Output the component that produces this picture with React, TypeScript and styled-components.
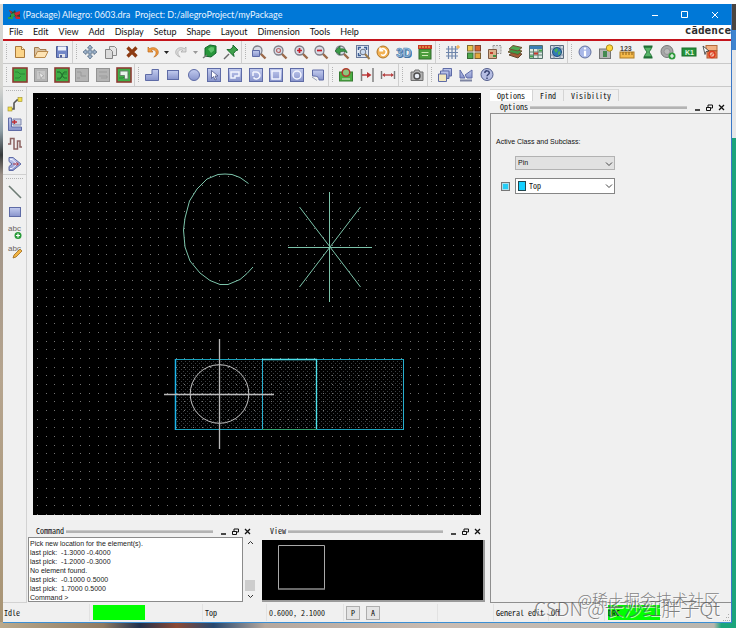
import React from 'react';
import styled, { createGlobalStyle } from 'styled-components';

const GlobalStyle = createGlobalStyle`
  * { box-sizing: border-box; }
  html, body { margin: 0; padding: 0; }
  button, select, input, textarea { font: inherit; color: inherit; margin: 0; padding: 0; }
`;

const ui = 'Lato, "Open Sans", sans-serif';
const sans = '"Liberation Sans", Arial, sans-serif';
const mono = '"Noto Sans CJK SC", "Liberation Mono", monospace';

const Desktop = styled.div`
  display: flex;
  flex-direction: column;
  min-height: 100vh;
  padding: 4px 4px 5px 3px;
  position: relative;
  overflow: hidden;
  background:
    linear-gradient(#fff, #fff) 0 0 / 100% 4px no-repeat,
    linear-gradient(#4b4540 0 30px, #3f84cf 30px 50px, #e6e7e8 50px 138px, #1ba47b 138px) 100% 0 / 5px 100% no-repeat,
    linear-gradient(90deg, #b9a98c 0, #8f7b62 14%, #20304c 19%, #8b4a35 24%, #27486f 29%, #b5a89e 36%, #c9bcb2 60%, #b9b6ae 97%, #1ba47b 98%) 0 100% / 100% 6px no-repeat,
    linear-gradient(#d6d6d2 0 86px, #8fa0a8 130px, #35383a 155px, #9a8f86 175px, #b6a58f 60%, #a89474);
`;

const Window = styled.main`
  display: flex;
  flex-direction: column;
  flex: 1;
  background: #f0f0f0;
  border-right: 1px solid #3a78c8;
  border-bottom: 1px solid #3b8fd4;
  font: 9px/12px ${ui};
  color: #111;
`;

const TitleBar = styled.header`
  display: flex;
  align-items: center;
  height: 21px;
  padding: 0 1px 0 5px;
  gap: 3px;
  background: #0078d7;
  color: #e9f4ff;
`;

const TitleText = styled.h1`
  flex: 1;
  margin: 0;
  font: inherit;
  white-space: pre;
`;

const ControlRow = styled.div`
  display: flex;
`;

const WindowButton = styled.button`
  display: grid;
  place-items: center;
  width: 30px;
  height: 20px;
  border: 0;
  background: none;
`;

const MenuBar = styled.nav`
  display: flex;
  align-items: center;
  height: 16px;
  padding: 0 0 1px 6px;
  gap: 10px;
  background: #fff;
  border-bottom: 2px solid #c4141c;
`;

const MenuItem = styled.button`
  padding: 0;
  border: 0;
  background: none;
`;

const Brand = styled.span`
  margin-left: auto;
  padding-bottom: 2px;
  font: bold 11px/12px "DejaVu Sans Mono", monospace;
  color: #2d2d2d;
`;

const Toolbar = styled.div`
  display: flex;
  height: 23px;
  border-bottom: 1px solid #c9c9c9;
  background: #f1f1f1;
`;

const ToolGroup = styled.div<{ $width: number; $last?: boolean }>`
  display: flex;
  align-items: center;
  width: ${(p) => p.$width}px;
  border-right: ${(p) => (p.$last ? '0' : '1px solid #cfcfcf')};
`;

const Grip = styled.span`
  width: 7px;
  height: 16px;
  flex: none;
  background: repeating-linear-gradient(#b4b4b4 0 1px, transparent 1px 2px) 3px 0 / 1px 100% no-repeat;
`;

const ToolButton = styled.button`
  display: grid;
  place-items: center;
  flex: 1 1 16px;
  min-width: 0;
  height: 20px;
  border: 0;
  background: none;
`;

const CaretButton = styled(ToolButton)`
  flex: 0 0 8px;
`;

const Body = styled.div`
  display: flex;
  flex: 1;
  min-height: 0;
`;

const Sidebar = styled.aside`
  display: flex;
  flex-direction: column;
  width: 24px;
  border-right: 1px solid #d2d2d2;
  border-bottom: 1px solid #d2d2d2;
`;

const SideGroup = styled.div`
  display: flex;
  flex-direction: column;
  & + & { border-top: 1px solid #cfcfcf; }
`;

const SideGrip = styled.span`
  height: 7px;
  margin: 0 3px;
  background: repeating-linear-gradient(90deg, #b4b4b4 0 1px, transparent 1px 2px) 0 3px / 100% 1px no-repeat;
`;

const SideButton = styled.button`
  display: grid;
  place-items: center;
  height: 20px;
  border: 0;
  background: none;
`;

const Workspace = styled.section`
  display: flex;
  flex-direction: column;
  flex: 1;
  min-width: 0;
  padding: 6px 5px 1px 1px;
`;

const Canvas = styled.svg`
  display: block;
  flex: 1 1 0;
  min-height: 0;
  width: calc(100% - 9px);
  margin: 0 4px 0 5px;
  background: #000;
`;

const Docks = styled.div`
  display: flex;
  gap: 7px;
  height: 87px;
  padding-top: 10px;
`;

const Dock = styled.section<{ $width?: number }>`
  display: flex;
  flex-direction: column;
  flex: ${(p) => (p.$width ? `0 0 ${p.$width}px` : '1')};
  min-width: 0;
`;

const PanelTitle = styled.div<{ $wide?: boolean }>`
  display: flex;
  align-items: center;
  height: 12px;
  padding: ${(p) => (p.$wide ? '0 4px 0 10px' : '0 2px 0 8px')};
  font: 8px/12px ${mono};
  font-feature-settings: "hwid";
`;

const PanelName = styled.h2`
  margin: 0;
  font: inherit;
`;

const PanelRule = styled.span`
  flex: 1;
  height: 3px;
  margin: 0 4px 0 2px;
  background: #b3b3b3;
  border-top: 1px solid #c8c8c8;
`;

const PanelButton = styled.button`
  display: grid;
  place-items: center;
  width: 12px;
  height: 12px;
  border: 0;
  background: none;
`;

const LogRow = styled.div`
  display: flex;
  flex: 1;
  gap: 2px;
`;

const Log = styled.textarea`
  flex: 1;
  min-width: 0;
  resize: none;
  overflow: hidden;
  border: 1px solid #8b8b8b;
  outline: 0;
  padding: 1px 1px 0;
  background: #fff;
  font: 7px/9px ${sans};
  color: #222;
  white-space: pre;
`;

const Scroll = styled.div`
  display: flex;
  flex-direction: column;
  align-items: center;
  width: 10px;
`;

const ScrollButton = styled.button`
  display: grid;
  place-items: center;
  width: 10px;
  height: 11px;
  border: 0;
  background: none;
`;

const Thumb = styled.span`
  width: 10px;
  height: 11px;
  margin-top: auto;
  background: #cdcdcd;
`;

const Overview = styled.svg`
  display: block;
  flex: 1;
  min-height: 0;
  width: 100%;
  margin-top: 3px;
  background: #000;
  border: solid #9a9a9a;
  border-width: 0 2px 2px 0;
`;

const Side = styled.aside`
  display: flex;
  flex-direction: column;
  width: 241px;
`;

const Tabs = styled.div`
  display: flex;
  height: 14px;
  padding-top: 2px;
  font: 8px/11px ${mono};
  font-feature-settings: "hwid";
`;

const Tab = styled.button<{ $active?: boolean }>`
  padding: 0 7px;
  border: 0;
  border-right: 1px solid #d4d4d4;
  border-top: 1px solid #d9d9d9;
  background: ${(p) => (p.$active ? '#fff' : '#f0f0f0')};
  font-feature-settings: inherit;
`;

const OptionsPanel = styled.div`
  display: flex;
  flex-direction: column;
  flex: 1;
  border: 1px solid #8f8f8f;
  border-right: 0;
  padding: 22px 5px;
  font: 7px/12px ${sans};
`;

const Field = styled.div`
  display: grid;
  grid-template-columns: 19px 100px;
  align-items: center;
  margin-top: 8px;
`;

const SelectBox = styled.div`
  position: relative;
  display: grid;
`;

const Select = styled.select<{ $white?: boolean }>`
  appearance: none;
  height: ${(p) => (p.$white ? 16 : 14)}px;
  padding: 0 12px 0 ${(p) => (p.$white ? 13 : 2)}px;
  border: 1px solid ${(p) => (p.$white ? '#858585' : '#b2b2b2')};
  border-radius: 0;
  background: ${(p) => (p.$white ? '#fff' : '#e1e1e1')};
  font: ${(p) => (p.$white ? `8px/12px ${mono}` : `7px/12px ${sans}`)};
  font-feature-settings: ${(p) => (p.$white ? '"hwid"' : 'normal')};
`;

const SelectArrow = styled.svg`
  position: absolute;
  right: 2px;
  top: 5px;
  pointer-events: none;
`;

const Swatch = styled.span`
  position: absolute;
  left: 3px;
  top: 3px;
  width: 8px;
  height: 10px;
  border: 1px solid #24464e;
  background: #15d0ff;
`;

const Check = styled.input`
  appearance: none;
  width: 9px;
  height: 9px;
  margin-left: 5px;
  border: 1px solid #777;
  background: #25cdf5;
  box-shadow: inset 0 0 0 1px #a9dfee;
`;

const StatusBar = styled.footer`
  display: flex;
  align-items: center;
  height: 19px;
  position: relative;
  font: 8px/12px ${mono};
  font-feature-settings: "hwid";
`;

const StatusCell = styled.div<{ $width?: number }>`
  display: flex;
  align-items: center;
  gap: 6px;
  flex: ${(p) => (p.$width ? `0 0 ${p.$width}px` : '1')};
  height: 17px;
  padding-left: 2px;
  border-left: 1px solid #e2e2e2;
  white-space: nowrap;
  &:first-child { border-left: 0; padding-left: 1px; }
`;

const Light = styled.span`
  width: 52px;
  height: 15px;
  margin-left: 1px;
  background: #0f0;
  line-height: 15px;
`;

const StatusButton = styled.button`
  width: 14px;
  height: 14px;
  border: 1px solid #adadad;
  background: #e4e4e4;
  font-feature-settings: inherit;
`;

const SizeGrip = styled.svg`
  position: absolute;
  right: 1px;
  bottom: 1px;
`;

const Watermark = styled.div`
  position: absolute;
  right: 16px;
  bottom: 15px;
  display: grid;
  justify-items: end;
  color: rgba(90, 90, 90, 0.75);
  font-family: "Noto Sans CJK SC", sans-serif;
  font-weight: 300;
  white-space: nowrap;
  pointer-events: none;
`;

const MarkLine = styled.span<{ $large?: boolean }>`
  font-size: ${(p) => (p.$large ? 19 : 16)}px;
  line-height: ${(p) => (p.$large ? 10 : 8)}px;
  text-shadow: 1px 1px rgba(255, 255, 255, 0.7);
`;

const B = { fill: 'url(#blue)', stroke: '#5e6ba6' };
const frame = <rect x="1.5" y="1.5" width="13" height="13" {...B} />;
const white = { fill: 'none', stroke: '#f4f6ff', strokeWidth: 1.5 };
const board = (
  <>
    <rect x="1" y="1" width="14" height="14" fill="#3fae45" stroke="#8e3b34" strokeWidth="1.6" />
    <path d="M3 5h3l2 2h5M3 11h4l2-2" fill="none" stroke="#2b8736" />
  </>
);
const greyBoard = <rect x="1.5" y="1.5" width="13" height="13" fill="#b4b4b4" stroke="#939393" />;
const lens = (
  <>
    <path d="M9.5 9.5l5 5" stroke="#9c6a49" strokeWidth="2.4" />
    <circle cx="6.5" cy="6.5" r="4.5" fill="#d9dce6" stroke="#7e7f88" strokeWidth="1.3" />
  </>
);
const abc = (
  <text x="1" y="7" fontSize="8" fontFamily="Liberation Sans" fill="#6b6462">
    abc
  </text>
);

const icons: Record<string, React.ReactNode> = {
  New: (
    <>
      <path d="M3.5 2.5h6l3 3v8h-9z" fill="#fbd489" stroke="#a9793c" />
      <path d="M9.5 2.5v3h3" fill="#fff3d4" stroke="#a9793c" />
    </>
  ),
  Open: (
    <>
      <path d="M1.5 13V3.5h4l1.5 2h6v2" fill="#d9c2a0" stroke="#a27a4e" />
      <path d="M1.5 13.5l3-6h10.500l-3 6z" fill="#fde3b4" stroke="#b98b4e" />
    </>
  ),
  Save: (
    <>
      <path d="M2.500 2.500h11v11h-11z" fill="#7287c8" stroke="#4d5d96" />
      <path d="M4 2.500h8v4H4z" fill="#eef1fa" />
      <path d="M5 10h6v3.500H5z" fill="#e2e4ea" />
      <path d="M6 11h2v2.500H6z" fill="#4d5d96" />
    </>
  ),
  Move: (
    <path d="M8 1l2.500 3H9v3h3V5.500L15 8l-3 2.500V9H9v3h1.500L8 15l-2.500-3H7V9H4v1.500L1 8l3-2.500V7h3V4H5.500z" fill="#9fb3cb" stroke="#596e87" strokeWidth=".8" />
  ),
  Copy: (
    <>
      <path d="M6.500 2.500h5l2 2v7h-7z" fill="#e6e6e6" stroke="#8b8b8b" />
      <path d="M2.500 5.500h5l2 2v7h-7z" fill="#dadada" stroke="#848484" />
    </>
  ),
  Delete: <path d="M3.500 3.500l9 9M12.500 3.500l-9 9" stroke="#8d3b13" strokeWidth="3.200" />,
  Undo: (
    <path d="M3 3v5h5L6.300 6.300c3-1.500 5.200.7 4.700 3.200-.2 1.500-1 2.500-2.200 3.500 3.500-1 5-3.300 4.300-6C12.300 4 8 2.500 4.700 4.700z" fill="#f29b3c" stroke="#b8651d" strokeWidth=".7" />
  ),
  Redo: (
    <path d="M13 3v5H8l1.700-1.700c-3-1.500-5.200.7-4.700 3.200.2 1.500 1 2.500 2.200 3.500-3.500-1-5-3.300-4.300-6C3.700 4 8 2.500 11.300 4.700z" fill="#dcdcdc" stroke="#a5a5a5" strokeWidth=".7" />
  ),
  Highlight: (
    <>
      <path d="M3 4l5-3 6 1v7l-5 4-6-1z" fill="#27963a" stroke="#12662a" />
      <path d="M6 5l3-2 3 .500v3L9 9z" fill="#5fc26c" />
      <path d="M1 14l4-3" stroke="#777" strokeWidth="1.500" />
    </>
  ),
  Pin: (
    <>
      <path d="M1 15l5-5" stroke="#6a6a6a" strokeWidth="1.500" />
      <path d="M10 1l5 5-2 .500-2.500 3 .500 3L4 5.500l3 .200 3-2.700z" fill="#3ea04a" stroke="#1a6a2c" />
    </>
  ),
  'Zoom by points': (
    <>
      {lens}
      <path d="M1.500 6.500h7v6h-7z" {...B} />
    </>
  ),
  'Zoom fit': (
    <>
      {lens}
      <circle cx="6.500" cy="6.500" r="2" fill="none" stroke="#b66565" strokeWidth="1.200" />
    </>
  ),
  'Zoom in': (
    <>
      {lens}
      <path d="M4 6.500h5M6.500 4v5" stroke="#c0202c" strokeWidth="1.700" />
    </>
  ),
  'Zoom out': (
    <>
      {lens}
      <path d="M4 6.500h5" stroke="#c0202c" strokeWidth="1.700" />
    </>
  ),
  'Zoom previous': (
    <>
      {lens}
      <path d="M1 7l5-5v3c4-1 7 1 7 4-2-2-4-2-7-1v3z" fill="#3b9a49" stroke="#23692f" strokeWidth=".7" />
    </>
  ),
  'Zoom selection': (
    <>
      <rect x="1.500" y="1.500" width="12" height="12" fill="#dde6f3" stroke="#6a7a9c" />
      <path d="M3.500 6V3.500H6M9 3.500h2.500V6M3.500 9v2.500H6" fill="none" stroke="#3b5c93" strokeWidth="1.400" />
      <circle cx="8" cy="8" r="2.800" fill="#c9d9ee" stroke="#6d7688" />
      <path d="M10 10l4.500 5" stroke="#9c7a4a" strokeWidth="2" />
    </>
  ),
  Redraw: (
    <>
      <circle cx="8" cy="8" r="6" fill="#f3b253" stroke="#b0762a" />
      <path d="M5.500 6A3.200 3.200 0 1 1 6 10.500M5 3.500v3.200h3.200" fill="none" stroke="#fff" strokeWidth="1.500" />
    </>
  ),
  '3D view': (
    <>
      <text x="1" y="13.500" fontSize="12" fontFamily="Liberation Sans" fontWeight="bold" fill="#44719f">
        3D
      </text>
      <text x="0" y="12.500" fontSize="12" fontFamily="Liberation Sans" fontWeight="bold" fill="#9cc3e4" stroke="#4f7fae" strokeWidth=".6">
        3D
      </text>
    </>
  ),
  'Flip board': (
    <>
      <rect x="2" y="5" width="12" height="10" fill="#4c9c3d" stroke="#2f6b2a" />
      <rect x="1" y="1" width="14" height="4" fill="#c63a26" />
      <path d="M3 2v2M6 2v2M9 2v2M12 2v2" stroke="#f4d35e" />
      <path d="M4.500 8.500h7M5 11.500h6" fill="none" stroke="#cfe8b6" />
    </>
  ),
  Grid: (
    <>
      <path d="M1 5h12M1 8.500h12M1 12h12M3.500 2v13M7 2v13M10.500 2v13" stroke="#6f86ab" strokeWidth="1.200" />
      <path d="M13 1v4M11 3h4" stroke="#eda336" />
    </>
  ),
  Colors: (
    <>
      <rect x="1.500" y="1.500" width="5.500" height="5.500" fill="#ecc64c" stroke="#7c6a31" />
      <rect x="9" y="1.500" width="5.500" height="5.500" fill="#d8632f" stroke="#7c4331" />
      <rect x="1.500" y="9" width="5.500" height="5.500" fill="#4eaa4c" stroke="#376b33" />
      <rect x="9" y="9" width="5.500" height="5.500" fill="#e5a93d" stroke="#7c6031" />
    </>
  ),
  Shadow: (
    <>
      <path d="M6 1.500h8v8H6z" fill="#ddd" stroke="#999" strokeDasharray="2 1" />
      <path d="M1.500 5.500h8v9h-8z" fill="#dab28c" stroke="#7e5b44" />
      <path d="M3 8h3v2H3z" fill="#c2402d" />
      <path d="M6 11h3v2H6z" fill="#3e9344" />
    </>
  ),
  Layers: (
    <>
      <path d="M2 11l4-3 9 2-4 4z" fill="#a65a38" stroke="#5f4830" />
      <path d="M1 8l4-3 10 2-4 3.500z" fill="#3f9b47" stroke="#74502e" />
      <path d="M2 5l4-3.500 9 2L11 7z" fill="#4fa852" stroke="#714e32" />
    </>
  ),
  'Constraint manager': (
    <>
      <path d="M1.500 1.500h13v13h-13z" fill="#dde9e3" stroke="#55716a" />
      <path d="M2 2h12v3H2z" fill="#3d7fb5" />
      <path d="M2 8h12M2 11h12M5.500 5v9M10 5v9" stroke="#5c7d70" />
      <path d="M6 8.500h4v2H6z" fill="#c83b2f" />
      <path d="M2 11.500h3v2H2zM11 5.500h3v2h-3z" fill="#41a04a" />
    </>
  ),
  'World view': (
    <>
      <path d="M1.500 1.500h13v13h-13z" fill="#cfd8e2" stroke="#5c6b7c" />
      <path d="M1.500 5h13M1.500 11h13M5 1.500v13M11 1.500v13" stroke="#7688a0" />
      <circle cx="8" cy="8" r="4.500" fill="#3279b7" stroke="#225180" />
      <path d="M5 6l3-2 1 2-2 3zM9 8l2-1 .500 3L9 11z" fill="#48b158" />
    </>
  ),
  Information: (
    <>
      <circle cx="8" cy="8" r="6" fill="#a9b8e8" stroke="#66749f" />
      <path d="M8 3.500v2M8 6.800v5.500" stroke="#fff" strokeWidth="2.200" />
    </>
  ),
  'Show element': (
    <>
      <rect x="1.500" y="5" width="11" height="9.500" fill="#b6b6b6" stroke="#747474" />
      <path d="M5 7h4v6H5z" fill="#458a51" />
      <circle cx="11.500" cy="4" r="3.200" fill="#ffd93c" stroke="#ab8a20" />
    </>
  ),
  Measure: (
    <>
      <text x="1" y="6.500" fontSize="7" fontFamily="Liberation Sans" fontWeight="bold" fill="#4c4540">
        123
      </text>
      <rect x="1" y="8" width="14" height="6" fill="#f5ba4b" stroke="#ad7b25" />
      <path d="M4 8v3M7 8v3M10 8v3M13 8v3" stroke="#8a5f1a" />
    </>
  ),
  Wait: (
    <>
      <path d="M4.500 3c0 3 2 3.500 2.500 5-.500 1.500-2.500 2-2.500 5h7c0-3-2-3.500-2.500-5 .500-1.500 2.500-2 2.500-5z" fill="#57b468" stroke="#25793a" />
      <path d="M3.500 2.500h9M3.500 13.500h9" stroke="#1f6f34" strokeWidth="2" />
    </>
  ),
  'Add via': (
    <>
      <circle cx="7" cy="7.500" r="6" fill="#a7a7a7" stroke="#777" />
      <circle cx="7" cy="7.500" r="3" fill="#b9b9b9" stroke="#949494" />
      <circle cx="12" cy="12" r="3.500" fill="#2f9b3c" />
      <path d="M10 12h4M12 10v4" stroke="#fff" strokeWidth="1.200" />
    </>
  ),
  'Reference label': (
    <>
      <rect x="1" y="4" width="14" height="8" fill="#24923a" stroke="#1b6c2b" />
      <text x="4" y="10.500" fontSize="7" fontFamily="Liberation Sans" fontWeight="bold" fill="#e5f8e2">
        K1
      </text>
    </>
  ),
  'Waive DRC': (
    <>
      <rect x="4" y="1.500" width="11" height="5" fill="#f1b184" stroke="#b46a3b" />
      <rect x="5" y="7" width="10" height="7" fill="#e88a55" stroke="#b3532e" />
      <circle cx="10" cy="10.500" r="3" fill="#f3b9a0" stroke="#dc3b20" strokeWidth="1.500" />
      <path d="M8 12.500l4-4" stroke="#dc3b20" />
      <path d="M1 2l6 5-3 .500-1 3z" fill="#fff" stroke="#333" strokeWidth=".8" />
    </>
  ),
  'General mode': board,
  'Placement mode': (
    <>
      {greyBoard}
      <path d="M4 4h8v8H4z" fill="#c8c8c8" />
      <path d="M6 5l5 4-2 .500-1 2.500z" fill="#eee" stroke="#999" strokeWidth=".6" />
    </>
  ),
  'Etch mode': (
    <>
      {board}
      <path d="M3 12h3l4-7h3M3 5h3l4 6h3" fill="none" stroke="#22702e" />
    </>
  ),
  'Flow mode': (
    <>
      {greyBoard}
      <path d="M3 5h4v4h5M3 11h3" fill="none" stroke="#9a9a9a" />
    </>
  ),
  'Signal mode': (
    <>
      {greyBoard}
      <path d="M4 5h8M4 9h8v2H6" fill="none" stroke="#9c9c9c" />
    </>
  ),
  'Shape mode': (
    <>
      {board}
      <path d="M4 4h8v8H8.500V8.500H4z" fill="#e9f3ea" stroke="#69806c" />
    </>
  ),
  'Shape polygon': <path d="M8 2.500h6.500v11H1.500v-6H8z" {...B} />,
  'Shape rectangle': <rect x="2.500" y="3.500" width="11" height="9" {...B} />,
  'Shape circle': <circle cx="8" cy="8" r="5.500" {...B} />,
  'Shape select': (
    <>
      {frame}
      <path d="M5.500 3.500v8l2-2 1.500 3.500 1.500-.700-1.500-3.300h3z" fill="#fff" stroke="#4b578c" strokeWidth=".8" />
    </>
  ),
  'Void polygon': (
    <>
      {frame}
      <path d="M4 11V5h8v4H8v2z" {...white} />
    </>
  ),
  'Void arc': (
    <>
      {frame}
      <path d="M5 5h3.500a3.500 3.500 0 1 1-3 5.500M5 5v4" {...white} />
    </>
  ),
  'Void rectangle': (
    <>
      {frame}
      <rect x="4" y="4" width="8" height="8" {...white} />
    </>
  ),
  'Void circle': (
    <>
      {frame}
      <circle cx="8" cy="8" r="4" {...white} />
    </>
  ),
  'Edit boundary': (
    <>
      <path d="M2.500 3h11v10H9c0-3-2-4-6.500-4z" {...B} />
      <path d="M2 10l5 3.500" stroke="#9aa0b5" />
    </>
  ),
  Artwork: (
    <>
      <rect x="1.500" y="5" width="13" height="9" fill="#4cae42" stroke="#347b31" />
      <circle cx="8" cy="5.500" r="3.800" fill="#8cc67c" stroke="#b03a2d" strokeWidth="1.500" />
      <path d="M4 12h8" stroke="#d7ebcf" />
    </>
  ),
  'Dimension ordinate': (
    <>
      <path d="M2.500 2v12M14 1v14" stroke="#808080" strokeWidth="1.500" />
      <path d="M3 8h6" stroke="#ba3333" strokeWidth="1.400" />
      <path d="M8 5l4.500 3L8 11z" fill="#ba3333" />
    </>
  ),
  'Dimension linear': (
    <>
      <path d="M1.500 4v8M14.500 4v8" stroke="#777" strokeWidth="1.400" />
      <path d="M3 8h10" stroke="#b94747" strokeWidth="1.400" />
      <path d="M2 8l3-2v4zM14 8l-3-2v4z" fill="#b94747" />
    </>
  ),
  Snapshot: (
    <>
      <path d="M2 5h3l1-2h4l1 2h3v8.500H2z" fill="#b3b3b3" stroke="#6f6f6f" />
      <circle cx="8" cy="9" r="3" fill="#e8edf5" stroke="#4d4d4d" strokeWidth="1.400" />
    </>
  ),
  Windows: (
    <>
      <path d="M6 1.500h8.500V9H6z" {...B} />
      <path d="M3.500 4H12v7.500H3.500z" {...B} />
      <path d="M1.500 7h8v7.500h-8z" fill="#f2e7bd" stroke="#5e6ba6" />
    </>
  ),
  'Flip design': (
    <>
      <path d="M2 3v8h5zM14 3v8H9L7 8z" {...B} />
      <path d="M2 13.500h12" stroke="#7d84a1" strokeWidth="2" />
    </>
  ),
  Help: (
    <>
      <circle cx="8" cy="7.500" r="6" fill="#b5bde2" stroke="#525d8c" />
      <path d="M5.800 6c.200-3 4.500-2.800 4.500 0C10.300 7.500 8 7.500 8 9.300M8 10.500v1.500" fill="none" stroke="#34406f" strokeWidth="1.400" />
    </>
  ),
  'Add connect': (
    <>
      <path d="M3 13h4V7l3-3h3" fill="none" stroke="#555" strokeWidth="1.600" />
      <rect x="1" y="11" width="4" height="4" fill="#f3e04a" stroke="#9c8d2b" strokeWidth=".6" />
      <rect x="11" y="1.500" width="4" height="4" fill="#f3e04a" stroke="#9c8d2b" strokeWidth=".6" />
    </>
  ),
  Slide: (
    <>
      <path d="M1.500 2h3v9h10v3.500h-13z" {...B} />
      <path d="M6 3h8v6H6z" fill="#cfd3e4" stroke="#7c86ad" />
      <path d="M5 6h5M7.500 4v4" stroke="#c03038" strokeWidth="1.400" />
    </>
  ),
  'Delay tune': <path d="M1 8h2.500V2.500H7V13h3.500V5H13v6h2" fill="none" stroke="#8c6361" strokeWidth="1.500" />,
  'Custom smooth': (
    <>
      <path d="M2 1.500h4l8 6.500-8 6.500H2v-4l3-2.500-3-2.500z" {...B} />
      <path d="M3 3.500h2l5 4.500-5 4.500H3" fill="none" stroke="#eef1ff" />
      <path d="M6 8h5M9.500 6.500l2 1.500-2 1.500" fill="none" stroke="#b03844" />
    </>
  ),
  'Add line': <path d="M2 2l12 12" stroke="#6d7c74" strokeWidth="1.600" />,
  'Add rectangle': <rect x="2.500" y="3.500" width="11" height="9" {...B} />,
  'Add text': (
    <>
      {abc}
      <circle cx="11" cy="11.500" r="3.500" fill="#2a9b3a" />
      <path d="M9 11.500h4M11 9.500v4" stroke="#fff" strokeWidth="1.200" />
    </>
  ),
  'Edit text': (
    <>
      {abc}
      <path d="M6 14l1-3 6-6 2 2-6 6z" fill="#f2b443" stroke="#9c6a1c" strokeWidth=".8" />
    </>
  ),
};

function Icon({ name }: { name: string }) {
  return (
    <svg width="16" height="16" viewBox="0 0 16 16" fill="none" aria-hidden="true">
      {icons[name]}
    </svg>
  );
}

type Group = { width: number; tools: string[] };

const topTools: Group[] = [
  { width: 70, tools: ['New', 'Open', 'Save'] },
  { width: 169, tools: ['Move', 'Copy', 'Delete', 'Undo', '|', 'Redo', '|', 'Highlight', 'Pin'] },
  {
    width: 194,
    tools: ['Zoom by points', 'Zoom fit', 'Zoom in', 'Zoom out', 'Zoom previous', 'Zoom selection', 'Redraw', '3D view', 'Flip board'],
  },
  { width: 132, tools: ['Grid', 'Colors', 'Shadow', 'Layers', 'Constraint manager', 'World view'] },
  {
    width: 152,
    tools: ['Information', 'Show element', 'Measure', 'Wait', 'Add via', 'Reference label', 'Waive DRC'],
  },
];

const shapeTools: Group[] = [
  { width: 132, tools: ['General mode', 'Placement mode', 'Etch mode', 'Flow mode', 'Signal mode', 'Shape mode'] },
  {
    width: 194,
    tools: ['Shape polygon', 'Shape rectangle', 'Shape circle', 'Shape select', 'Void polygon', 'Void arc', 'Void rectangle', 'Void circle', 'Edit boundary'],
  },
  { width: 70, tools: ['Artwork', 'Dimension ordinate', 'Dimension linear'] },
  { width: 29, tools: ['Snapshot'] },
  { width: 69, tools: ['Windows', 'Flip design', 'Help'] },
];

const sideTools = [
  ['Add connect', 'Slide', 'Delay tune', 'Custom smooth'],
  ['Add line', 'Add rectangle', 'Add text', 'Edit text'],
];

const menus = ['File', 'Edit', 'View', 'Add', 'Display', 'Setup', 'Shape', 'Layout', 'Dimension', 'Tools', 'Help'];

function WindowControls() {
  return (
    <ControlRow>
      <WindowButton aria-label="Minimize">
        <svg width="8" height="8" stroke="#fff" aria-hidden="true">
          <path d="M1 4.500h6" />
        </svg>
      </WindowButton>
      <WindowButton aria-label="Maximize">
        <svg width="8" height="8" fill="none" stroke="#fff" aria-hidden="true">
          <path d="M.500 .500h6v6h-6z" />
        </svg>
      </WindowButton>
      <WindowButton aria-label="Close">
        <svg width="8" height="8" stroke="#fff" aria-hidden="true">
          <path d="M1 1l6 6M7 1L1 7" />
        </svg>
      </WindowButton>
    </ControlRow>
  );
}

function ToolRow({ groups, label }: { groups: Group[]; label: string }) {
  return (
    <Toolbar role="toolbar" aria-label={label}>
      {groups.map((group, g) => (
        <ToolGroup key={g} $width={group.width} $last={g === groups.length - 1}>
          <Grip />
          {group.tools.map((tool, i) =>
            tool === '|' ? (
              <CaretButton key={i} aria-label={`${group.tools[i - 1]} history`}>
                <svg width="5" height="3" viewBox="0 0 5 3" aria-hidden="true">
                  <path d="M0 0h5L2.500 3z" fill={group.tools[i - 1] === 'Undo' ? '#222' : '#999'} />
                </svg>
              </CaretButton>
            ) : (
              <ToolButton key={i} aria-label={tool}>
                <Icon name={tool} />
              </ToolButton>
            ),
          )}
        </ToolGroup>
      ))}
    </Toolbar>
  );
}

function PanelHeader({ title, wide }: { title: string; wide?: boolean }) {
  return (
    <PanelTitle $wide={wide}>
      <PanelName>{title}</PanelName>
      <PanelRule />
      <PanelButton aria-label={`Minimize ${title}`}>
        <svg width="7" height="7" aria-hidden="true">
          <path d="M1 6h5" stroke="#111" strokeWidth="1.500" />
        </svg>
      </PanelButton>
      <PanelButton aria-label={`Float ${title}`}>
        <svg width="7" height="7" fill="none" stroke="#111" aria-hidden="true">
          <path d="M2 1h4.500v3H5M2 1v2M.500 3.500h4v3h-4zM.500 3.500h4" />
        </svg>
      </PanelButton>
      <PanelButton aria-label={`Close ${title}`}>
        <svg width="7" height="7" stroke="#111" strokeWidth="1.300" aria-hidden="true">
          <path d="M1 1l5 5M6 1l-5 5" />
        </svg>
      </PanelButton>
    </PanelTitle>
  );
}

const pitch = 26 / 3;
const gridDots = Array.from({ length: 49 }, (_, row) =>
  Array.from({ length: 52 }, (_, col) => `M${Math.round(4 + col * pitch)} ${Math.round(5 + row * pitch) + 0.5}h1`).join(''),
).join('');

function DesignCanvas() {
  return (
    <Canvas viewBox="0 0 448 422" preserveAspectRatio="xMidYMid slice" fill="none" role="img" aria-label="Package drawing">
      <defs>
        <pattern id="hatch" width="4" height="4" patternUnits="userSpaceOnUse">
          <path d="M0 .500h1M2 2.500h1" stroke="#3c4144" />
        </pattern>
      </defs>
      <rect x="143" y="267" width="227" height="69" fill="url(#hatch)" />
      <path d={gridDots} stroke="#747474" />
      <path
        d="M215.500 90.500L207 84.500L199 81.500L192 81L185 81.500L174 86L164 96L156.500 108L152 125L150.500 137L152 154L157 168L167 180L177 187.500L187 191.500L195 191.500L207 186.500L214 180.500L220 174"
        stroke="#7cc4aa"
      />
      <path d="M296.500 99v110M255 154.500h84M266.500 114l61 80M327.500 114l-61 80" stroke="#7cc4aa" />
      <path d="M142 266.500h229M142 336.500h229" stroke="#1aa3bd" />
      <path d="M370.500 266v71M229.500 266v71" stroke="#27b0d0" />
      <path d="M142.500 266v71" stroke="#1db4ea" strokeWidth="1.500" />
      <path d="M229 266.500h55M283.500 266v71" stroke="#4be0ea" strokeWidth="1.300" />
      <path d="M229 336.500h55" stroke="#2fa374" />
      <circle cx="186.500" cy="301" r="29.300" stroke="#c4c4c4" />
      <path d="M186.500 246v110M131 301.500h110" stroke="#b9b9b9" strokeWidth="1.300" />
    </Canvas>
  );
}

function Chevron() {
  return (
    <SelectArrow width="8" height="7" fill="none" stroke="#444" aria-hidden="true">
      <path d="M1 1.500l3 3 3-3" />
    </SelectArrow>
  );
}

const log = `Pick new location for the element(s).
last pick:  -1.3000 -0.4000
last pick:  -1.2000 -0.3000
No element found.
last pick:  -0.1000 0.5000
last pick:  1.7000 0.5000
Command >`;

export default function App() {
  return (
    <Desktop>
      <GlobalStyle />
      <Window>
        <TitleBar>
          <svg width="12" height="11" viewBox="0 0 12 11" aria-hidden="true">
            <defs>
              <linearGradient id="blue" x1="0" y1="0" x2="0" y2="1">
                <stop offset="0" stopColor="#c3ccef" />
                <stop offset="1" stopColor="#8793cb" />
              </linearGradient>
            </defs>
            <path d="M1 1l4 2 2-2 1 3 4-1v6H8L6 7 1 9l2-4z" fill="#2a4a35" />
            <path d="M1 1l3 2-1 2zM6 4l6-2v3L8 7zM7 7l5 1v2H8z" fill="#d02832" />
            <path d="M3 5l3-1 1 3-4 2zM0 8h5v2H0z" fill="#2f9f49" />
          </svg>
          <TitleText>{'(Package) Allegro: 0603.dra  Project: D:/allegroProject/myPackage'}</TitleText>
          <WindowControls />
        </TitleBar>
        <MenuBar>
          {menus.map((menu) => (
            <MenuItem key={menu}>{menu}</MenuItem>
          ))}
          <Brand>cādence</Brand>
        </MenuBar>
        <ToolRow groups={topTools} label="Main tools" />
        <ToolRow groups={shapeTools} label="Shape tools" />
        <Body>
          <Sidebar>
            {sideTools.map((group, g) => (
              <SideGroup key={g}>
                <SideGrip />
                {group.map((tool) => (
                  <SideButton key={tool} aria-label={tool}>
                    <Icon name={tool} />
                  </SideButton>
                ))}
              </SideGroup>
            ))}
          </Sidebar>
          <Workspace>
            <DesignCanvas />
            <Docks>
              <Dock $width={227}>
                <PanelHeader title="Command" />
                <LogRow>
                  <Log aria-label="Command log" defaultValue={log} spellCheck={false} />
                  <Scroll>
                    <ScrollButton aria-label="Scroll up">
                      <svg width="7" height="5" fill="none" stroke="#333" aria-hidden="true">
                        <path d="M1 4l2.500-2.500L6 4" />
                      </svg>
                    </ScrollButton>
                    <Thumb />
                    <ScrollButton aria-label="Scroll down">
                      <svg width="7" height="5" fill="none" stroke="#333" aria-hidden="true">
                        <path d="M1 1l2.500 2.500L6 1" />
                      </svg>
                    </ScrollButton>
                  </Scroll>
                </LogRow>
              </Dock>
              <Dock>
                <PanelHeader title="View" />
                <Overview fill="none" role="img" aria-label="Overview of the design">
                  <path d="M16.500 49V5.500H62.500V49" stroke="#a9a9a9" />
                  <path d="M16 49h47" stroke="#8d8d8d" strokeWidth="1.500" />
                </Overview>
              </Dock>
            </Docks>
          </Workspace>
          <Side>
            <Tabs role="tablist">
              <Tab role="tab" aria-selected="true" $active>Options</Tab>
              <Tab role="tab" aria-selected="false">Find</Tab>
              <Tab role="tab" aria-selected="false">Visibility</Tab>
            </Tabs>
            <PanelHeader title="Options" wide />
            <OptionsPanel>
              <label htmlFor="class">Active Class and Subclass:</label>
              <Field>
                <span />
                <SelectBox>
                  <Select id="class" defaultValue="Pin">
                    <option>Pin</option>
                  </Select>
                  <Chevron />
                </SelectBox>
              </Field>
              <Field>
                <Check type="checkbox" aria-label="Show subclass" defaultChecked />
                <SelectBox>
                  <Select $white aria-label="Subclass" defaultValue="Top">
                    <option>Top</option>
                  </Select>
                  <Swatch />
                  <Chevron />
                </SelectBox>
              </Field>
            </OptionsPanel>
          </Side>
        </Body>
        <StatusBar>
          <StatusCell $width={86}>Idle</StatusCell>
          <StatusCell $width={113}>
            <Light />
          </StatusCell>
          <StatusCell $width={64}>Top</StatusCell>
          <StatusCell $width={77}>0.6000, 2.1000</StatusCell>
          <StatusCell $width={94}>
            <StatusButton>P</StatusButton>
            <StatusButton>A</StatusButton>
          </StatusCell>
          <StatusCell />
          <StatusCell $width={55}>General edit</StatusCell>
          <StatusCell $width={56}>Off</StatusCell>
          <StatusCell $width={127}>
            <Light>DRC</Light>
          </StatusCell>
          <SizeGrip width="8" height="8" stroke="#aaa" strokeDasharray="1 1" aria-hidden="true">
            <path d="M6 1.500h1M4 4.500h4M1 7.500h7" />
          </SizeGrip>
        </StatusBar>
      </Window>
      <Watermark>
        <MarkLine>@稀土掘金技术社区</MarkLine>
        <MarkLine $large>CSDN @长沙红胖子Qt</MarkLine>
      </Watermark>
    </Desktop>
  );
}
